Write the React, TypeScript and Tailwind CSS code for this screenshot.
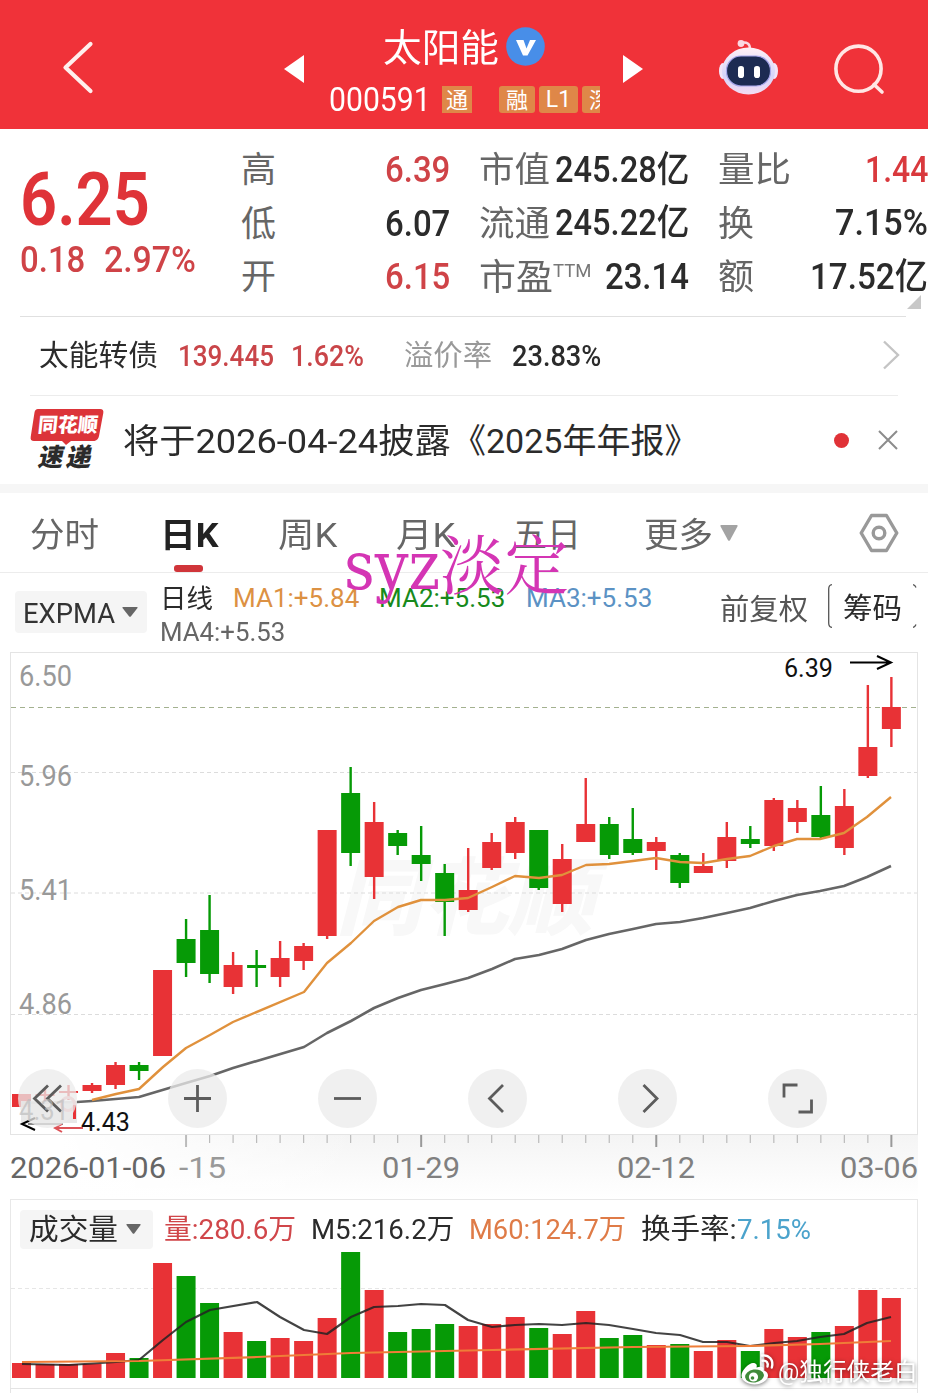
// 个股行情页 — 日K
import { useLayoutEffect, useRef, useState, type ReactNode } from 'react';
import clsx from 'clsx';

const RED = '#e83236';
const GREEN = '#069a06';

// 第一根K线的中心与间距
const X0 = 21.5;
const STEP = 23.51;
const BODY_W = 19;
const cx = (i: number) => X0 + STEP * i;

type Candle = [up: boolean, high: number, top: number, bottom: number, low: number, volTop: number];

const candles: Candle[] = [
  [true, 1094, 1094, 1107, 1107, 1363],
  [true, 1088, 1094, 1096, 1104, 1364],
  [true, 1085, 1091, 1093, 1100, 1364],
  [true, 1083, 1085, 1091, 1093, 1364],
  [true, 1062, 1065, 1085, 1089, 1353],
  [false, 1062, 1065, 1071, 1080, 1358],
  [true, 970, 970, 1056, 1056, 1263],
  [false, 919, 939, 963, 977, 1276],
  [false, 895, 930, 974, 983, 1303],
  [true, 952, 965, 987, 994, 1332],
  [false, 950, 965, 968, 987, 1341],
  [true, 941, 958, 977, 987, 1338],
  [true, 943, 946, 961, 970, 1341],
  [true, 830, 830, 936, 939, 1318],
  [false, 767, 793, 853, 866, 1252],
  [true, 802, 822, 877, 899, 1290],
  [false, 830, 833, 846, 855, 1332],
  [false, 826, 855, 864, 881, 1329],
  [false, 864, 873, 902, 936, 1324],
  [true, 848, 890, 910, 912, 1326],
  [true, 833, 842, 868, 870, 1324],
  [true, 817, 822, 853, 859, 1317],
  [false, 830, 830, 888, 890, 1328],
  [true, 844, 859, 904, 912, 1334],
  [true, 778, 824, 842, 842, 1311],
  [false, 817, 824, 855, 859, 1338],
  [false, 808, 839, 853, 855, 1335],
  [true, 837, 842, 851, 870, 1345],
  [false, 853, 855, 883, 888, 1344],
  [true, 853, 866, 873, 873, 1351],
  [true, 822, 837, 861, 868, 1340],
  [false, 826, 839, 844, 848, 1351],
  [true, 798, 800, 846, 851, 1329],
  [true, 800, 808, 822, 833, 1337],
  [false, 786, 815, 837, 838, 1332],
  [true, 789, 806, 848, 855, 1326],
  [true, 685, 747, 776, 778, 1290],
  [true, 677, 707, 729, 747, 1298],
];

const expmaFast =
  '92,1100 116,1094 139,1089 163,1067 186,1048 210,1035 233,1022 304,992 327,963 351,943 374,921 398,907 421,900 445,900 468,898 492,887 515,876 539,878 562,875 586,865 609,864 633,861 656,858 680,862 703,863 727,859 750,856 774,846 797,839 820,839 844,833 867,817 891,797';
const expmaSlow =
  '22,1103 77,1102 92,1101 139,1097 186,1083 210,1076 233,1068 304,1047 327,1033 351,1021 374,1008 398,998 421,990 445,984 468,978 492,969 515,959 539,955 562,949 586,940 609,934 633,929 656,924 680,922 703,918 727,913 750,908 774,901 797,895 820,891 844,886 867,877 891,866';
const volM5 =
  '22,1364 69,1365 116,1362 139,1360 163,1340 186,1322 210,1310 257,1302 280,1317 304,1330 327,1334 351,1317 374,1307 398,1306 421,1304 445,1305 468,1320 492,1327 515,1325 539,1324 562,1325 586,1323 609,1325 633,1329 656,1333 680,1335 703,1342 727,1342 750,1346 774,1343 797,1341 820,1337 844,1334 867,1323 891,1317';
const volM60 = '22,1362 139,1361 257,1357 351,1353 492,1350 633,1347 750,1346 820,1344 891,1341';

// 文字按容器宽度横向压缩，数字列才能对齐
function Fit({ className, children }: { className?: string; children: ReactNode }) {
  const box = useRef<HTMLSpanElement>(null);
  const inner = useRef<HTMLSpanElement>(null);
  const [scale, setScale] = useState(1);
  useLayoutEffect(() => {
    if (box.current && inner.current) setScale(box.current.clientWidth / inner.current.offsetWidth);
  }, []);
  return (
    <span ref={box} className={clsx('block shrink-0 leading-none', className)}>
      <span
        ref={inner}
        className="inline-block origin-left whitespace-nowrap"
        style={{ transform: `scaleX(${scale})` }}
      >
        {children}
      </span>
    </span>
  );
}

function Caret({ className }: { className?: string }) {
  return (
    <svg viewBox="0 0 16 10" preserveAspectRatio="none" className={clsx('shrink-0', className)}>
      <path d="M1 0H15Q16 0 15.5 1L9 9.3Q8 10.4 7 9.3L.5 1Q0 0 1 0Z" fill="currentColor" />
    </svg>
  );
}

function Header() {
  return (
    <header className="flex h-[129px] items-start bg-[#f03239] text-white">
      <svg className="mt-[40px] ml-[60px] h-[55px] w-[35px] shrink-0" viewBox="0 0 35 55" fill="none">
        <path d="M30.5 4 5.5 27.5 30.5 51" stroke="#ffefed" strokeWidth="4.2" strokeLinecap="round" strokeLinejoin="round" />
      </svg>
      <svg className="mt-[55px] ml-[189px] h-[28px] w-[20px] shrink-0" viewBox="0 0 20 28">
        <path d="M20 0V28L0 14Z" fill="#fff" />
      </svg>

      <div className="ml-[25px] w-[271px] shrink-0">
        <div className="flex h-[46px] items-end pl-[54px] pt-[27px] box-content">
          <Fit className="mb-[6px] w-[116px] text-[38px]">太阳能</Fit>
          <svg className="mb-[7px] ml-[7px] h-[39px] w-[39px]" viewBox="0 0 39 39">
            <circle cx="19.5" cy="19.5" r="19.3" fill="#488ee8" />
            <path d="M10 13H17.5L20.5 21.5 24 13H30L21.5 28.5H17Z" fill="#fff" />
          </svg>
        </div>
        <div className="flex h-[27px] items-center mt-[13px]">
          <Fit className="w-[102px] -translate-y-px text-[34px]">000591</Fit>
          <span className="ml-[11px] flex h-[27px] w-[30px] items-center justify-center bg-[#df8748] pt-[2px] text-[22px] leading-none">
            通
          </span>
          <span className="ml-[27px] flex h-[27px] w-[36px] items-center justify-center rounded-[3px] bg-[#df8748] pt-[2px] text-[22px] leading-none">
            融
          </span>
          <span className="ml-[4px] flex h-[27px] w-[39px] items-center justify-center rounded-[3px] bg-[#df8748] text-[23px] leading-none">
            L1
          </span>
          <span className="ml-[4px] flex h-[27px] w-[18px] items-center overflow-hidden rounded-l-[3px] bg-[#df8748] pt-[2px] pl-[7px] text-[22px] leading-none">
            深
          </span>
        </div>
      </div>

      <svg className="mt-[55px] ml-[23px] h-[28px] w-[20px] shrink-0" viewBox="0 0 20 28">
        <path d="M0 0V28L20 14Z" fill="#fff" />
      </svg>
      <svg className="mt-[38px] ml-[75px] h-[58px] w-[62px] shrink-0" viewBox="0 0 62 58">
        <defs>
          <linearGradient id="bot" x1="0" y1="0" x2="0" y2="1">
            <stop offset="0" stopColor="#fff0f6" />
            <stop offset="0.6" stopColor="#d6d4fa" />
            <stop offset="1" stopColor="#f3dcf2" />
          </linearGradient>
        </defs>
        <path d="M23 5Q32 3 32 11" stroke="#fbd8e2" strokeWidth="2.5" fill="none" />
        <circle cx="23" cy="5.5" r="3.4" fill="#fbd8e2" />
        <ellipse cx="5" cy="33" rx="4" ry="8" fill="#f3e4f8" />
        <ellipse cx="56" cy="33" rx="4" ry="8" fill="#f3e4f8" />
        <ellipse cx="30.5" cy="33" rx="26.5" ry="23.5" fill="url(#bot)" />
        <rect x="8.5" y="18" width="44" height="30" rx="14.5" fill="#1c2b52" stroke="#a6a6ea" strokeWidth="1.2" />
        <rect x="20" y="28" width="6" height="12" rx="2.8" fill="#fff" />
        <rect x="36" y="28" width="6" height="12" rx="2.8" fill="#fff" />
      </svg>
      <svg className="mt-[43px] ml-[52px] h-[52px] w-[54px] shrink-0" viewBox="0 0 54 52" fill="none" stroke="#ffe6e4" strokeWidth="3.6">
        <circle cx="26.5" cy="25.7" r="22.6" />
        <path d="M42 41.5 50 49" strokeLinecap="round" />
      </svg>
    </header>
  );
}

function Quote() {
  return (
    <section className="relative flex h-[187px] pt-[14px] text-[#2b2b2b]">
      <div className="w-[241px] shrink-0 pl-[20px] pt-[19px] text-[#df3338]">
        <Fit className="h-[74px] w-[130px] text-[75px] font-semibold">6.25</Fit>
        <div className="mt-[6px] flex text-[36px] font-medium text-[#cf4347]">
          <Fit className="w-[65px]">0.18</Fit>
          <Fit className="ml-[19px] w-[92px]">2.97%</Fit>
        </div>
      </div>

      <div className="w-[209px] shrink-0 text-[37px]">
        {[
          ['高', '6.39', true],
          ['低', '6.07', false],
          ['开', '6.15', true],
        ].map(([label, value, up]) => (
          <div key={label as string} className="flex h-[53.5px] items-center justify-between">
            <Fit className="w-[35px] pt-[2px] text-[35px] text-[#666]">{label}</Fit>
            <Fit className={clsx('w-[65px] font-medium', up && 'text-[#cf4347]')}>{value}</Fit>
          </div>
        ))}
      </div>

      <div className="ml-[29px] w-[210px] shrink-0 text-[36px]">
        <div className="flex h-[53.5px] items-center justify-between">
          <Fit className="w-[71px] pt-[2px] text-[35px] text-[#666]">市值</Fit>
          <Fit className="w-[134px] font-medium">245.28亿</Fit>
        </div>
        <div className="flex h-[53.5px] items-center justify-between">
          <Fit className="w-[71px] pt-[2px] text-[35px] text-[#666]">流通</Fit>
          <Fit className="w-[134px] font-medium">245.22亿</Fit>
        </div>
        <div className="flex h-[53.5px] items-center">
          <Fit className="w-[74px] pt-[2px] text-[36px] text-[#666]">市盈</Fit>
          <Fit className="mb-[12px] w-[38px] text-[19px] text-[#777]">TTM</Fit>
          <Fit className="ml-auto w-[84px] font-medium">23.14</Fit>
        </div>
      </div>

      <div className="ml-[29px] w-[210px] shrink-0 text-[36px]">
        <div className="flex h-[53.5px] items-center justify-between">
          <Fit className="w-[73px] pt-[2px] text-[35px] text-[#666]">量比</Fit>
          <Fit className="w-[63px] font-medium text-[#d9393d]">1.44</Fit>
        </div>
        <div className="flex h-[53.5px] items-center justify-between">
          <Fit className="w-[36px] pt-[2px] text-[35px] text-[#666]">换</Fit>
          <Fit className="w-[93px] font-medium">7.15%</Fit>
        </div>
        <div className="flex h-[53.5px] items-center justify-between">
          <Fit className="w-[36px] pt-[2px] text-[35px] text-[#666]">额</Fit>
          <Fit className="w-[118px] font-medium">17.52亿</Fit>
        </div>
      </div>

      <svg className="absolute right-[7px] bottom-[7px] h-[14px] w-[14px]" viewBox="0 0 14 14">
        <path d="M14 0V14H0Z" fill="#c8c8c8" />
      </svg>
    </section>
  );
}

function BondRow() {
  return (
    <section className="ml-[20px] mr-[22px] flex h-[79px] items-center border-t border-[#e0e0e0] pl-[19px] text-[29px] text-[#2b2b2b]">
      <Fit className="w-[119px]">太能转债</Fit>
      <Fit className="ml-[20px] w-[96px] font-medium text-[#c94549]">139.445</Fit>
      <Fit className="ml-[17px] w-[73px] font-medium text-[#c94549]">1.62%</Fit>
      <Fit className="ml-[40px] w-[88px] text-[#999]">溢价率</Fit>
      <Fit className="ml-[20px] w-[89px] font-medium">23.83%</Fit>
      <svg className="mr-[6px] mb-[3px] ml-auto h-[34px] w-[18px] shrink-0" viewBox="0 0 18 34" fill="none">
        <path d="M2 3.5 16 17 2 30.5" stroke="#c4c4c4" strokeWidth="2.4" />
      </svg>
    </section>
  );
}

function NewsRow() {
  return (
    <section className="ml-[30px] mr-[30px] flex h-[89px] items-center border-t border-[#ececec]">
      <div className="relative h-[62px] w-[75px] shrink-0">
        <svg className="absolute inset-0 h-full w-full" viewBox="0 0 75 62">
          <path d="M8 0H70Q74 0 73.300 4L69 27Q68.300 31 64.500 32H41L36 36 32 32H4Q0 32 .7 28L4.500 3.500Q5 0 8 0Z" fill="#dc3439" />
        </svg>
        <span className="absolute top-[6px] left-[8px] -skew-x-6 text-[20px] leading-none font-black whitespace-nowrap text-white">
          同花顺
        </span>
        <span className="absolute top-[36px] left-[9px] -skew-x-12 text-[25px] leading-none font-black tracking-[3px] whitespace-nowrap text-[#2b2b2b]">
          速递
        </span>
      </div>
      <div className="flex pt-[2px] text-[34px] text-[#2b2b2b]">
        <Fit className="ml-[18px] w-[328px]">将于2026-04-24披露</Fit>
        <Fit className="ml-[18px] w-[212px] [font-feature-settings:'halt']">《2025年年报》</Fit>
      </div>
      <span className="ml-auto h-[15px] w-[15px] rounded-full bg-[#e03237]" />
      <svg className="ml-[29px] h-[20px] w-[20px]" viewBox="0 0 20 20" stroke="#8c8c8c" strokeWidth="2">
        <path d="M1 1 19 19M19 1 1 19" />
      </svg>
    </section>
  );
}

function PeriodTabs() {
  return (
    <nav className="flex h-[80px] items-center border-b border-[#ececec] pl-[30px] text-[34px] text-[#666]">
      <Fit className="w-[69px] pt-[4px]">分时</Fit>
      <div className="relative ml-[61px]">
        <Fit className="w-[59px] pt-[4px] font-bold text-[#222]">日K</Fit>
        <span className="absolute top-[51px] left-[14px] h-[7px] w-[29px] rounded-[3px] bg-[#d0353a]" />
      </div>
      <Fit className="ml-[59px] w-[59px] pt-[4px]">周K</Fit>
      <Fit className="ml-[59px] w-[59px] pt-[4px]">月K</Fit>
      <Fit className="ml-[58px] w-[68px] pt-[4px]">五日</Fit>
      <Fit className="ml-[63px] w-[69px] pt-[4px]">更多</Fit>
      <Caret className="ml-[7px] h-[16px] w-[18px] text-[#a3a3a3]" />
      <svg className="ml-[120px] h-[40px] w-[42px]" viewBox="0 0 42 40" fill="none" stroke="#999">
        <path d="M13.500 2.500H28.500L38.800 20 28.500 37.500H13.500L3.200 20Z" strokeWidth="3.4" strokeLinejoin="round" />
        <circle cx="21" cy="20" r="5.8" strokeWidth="3.4" />
      </svg>
    </nav>
  );
}

function IndicatorBar() {
  return (
    <section className="flex h-[79px] items-start text-[26px]">
      <div className="mt-[18px] ml-[15px] flex h-[42px] w-[132px] shrink-0 items-center rounded-[4px] bg-[#f5f5f5] pt-[3px] pl-[8px]">
        <Fit className="w-[92px] text-[28px] text-[#333]">EXPMA</Fit>
        <Caret className="mb-[4px] ml-[7px] h-[10px] w-[16px] text-[#666]" />
      </div>
      <div className="mt-[9px] ml-[13px] w-[560px] shrink-0">
        <div className="flex h-[32px] items-center">
          <Fit className="w-[53px] pt-px text-[#2b2b2b]">日线</Fit>
          <Fit className="ml-[20px] w-[126px] text-[#dc9143]">MA1:+5.84</Fit>
          <Fit className="ml-[20px] w-[126px] text-[#178a1c]">MA2:+5.53</Fit>
          <Fit className="ml-[21px] w-[126px] text-[#5b92c4]">MA3:+5.53</Fit>
        </div>
        <div className="mt-[2px] flex h-[32px] items-center">
          <Fit className="w-[125px] text-[#666]">MA4:+5.53</Fit>
        </div>
      </div>
      <Fit className="mt-[23px] w-[88px] text-[29px] text-[#555]">前复权</Fit>
      <div className="relative mt-[11px] ml-[20px] flex h-[44px] w-[89px] items-center justify-center">
        <svg className="absolute inset-0 h-full w-full" viewBox="0 0 89 44" fill="none" stroke="#555" strokeWidth="1.3">
          <path d="M4 .7Q.7 1 .7 5V39Q.7 43 4 43.400M85 .7Q87 1 88 3.500M85 43.400Q87 43 88 40.500" />
        </svg>
        <Fit className="w-[59px] pt-[6px] text-[29px] text-[#2b2b2b]">筹码</Fit>
      </div>
    </section>
  );
}

function AxisText({ x, y, w, size = 29, fill = '#999', children }: { x: number; y: number; w: number; size?: number; fill?: string; children: string }) {
  return (
    <text x={x} y={y} fontSize={size} fill={fill} textLength={w} lengthAdjust="spacingAndGlyphs">
      {children}
    </text>
  );
}

const buttonIcons = [
  'M47 13.500 33.500 26.500 47 39.500M60 13.500 46.500 26.500 60 39.500',
  'M29.500 16V43M16 29.500H43',
  'M16 29.500H43',
  'M35 16 21.500 29.500 35 43',
  'M25.500 16 39 29.500 25.500 43',
  'M16 28.500V16H29.500M30.500 43H43.500V30.500',
];

function KChart() {
  return (
    <section className="relative h-[547px]">
      <svg className="block h-[547px] w-[928px]" viewBox="0 652 928 547">
        <defs>
          <linearGradient id="axis" x1="0" y1="0" x2="0" y2="1">
            <stop offset="0" stopColor="#f4f4f4" />
            <stop offset="0.7" stopColor="#fcfcfc" />
            <stop offset="1" stopColor="#fff" />
          </linearGradient>
          <linearGradient id="axisFade" x1="0" y1="0" x2="1" y2="0">
            <stop offset="0" stopColor="#fff" />
            <stop offset="0.35" stopColor="#fff" stopOpacity="0" />
          </linearGradient>
        </defs>
        <rect x="60" y="1134" width="858" height="65" fill="url(#axis)" />
        <rect x="60" y="1134" width="858" height="65" fill="url(#axisFade)" />
        <rect x="10.5" y="652.500" width="907" height="482" fill="#fff" stroke="#e4e4e4" />
        <text x="336" y="928" fontSize="84" fontWeight="900" fontStyle="italic" fill="#f8f8f8" textLength="258" lengthAdjust="spacingAndGlyphs">
          同花顺
        </text>
        {[772.5, 893, 1014.5].map(y => (
          <line key={y} x1="11" x2="917" y1={y} y2={y} stroke="#dcdcdc" strokeDasharray="4 3" />
        ))}
        <line x1="11" x2="917" y1="707.500" y2="707.500" stroke="#a3b18f" strokeDasharray="5 4" />

        <AxisText x={19} y={686} w={53}>6.50</AxisText>
        <AxisText x={19} y={786} w={53}>5.96</AxisText>
        <AxisText x={19} y={900} w={53}>5.41</AxisText>
        <AxisText x={19} y={1014} w={53}>4.86</AxisText>

        {candles.map(([up, high, top, bottom, low], i) => (
          <g key={i} fill={up ? RED : GREEN}>
            <rect x={cx(i) - 1.2} y={high} width="2.400" height={low - high} />
            <rect x={cx(i) - BODY_W / 2} y={top} width={BODY_W} height={bottom - top} />
          </g>
        ))}
        <polyline points={expmaSlow} fill="none" stroke="#666" strokeWidth="2.600" strokeLinejoin="round" />
        <polyline points={expmaFast} fill="none" stroke="#e0913c" strokeWidth="2.400" strokeLinejoin="round" />

        <AxisText x={784} y={677} w={49} size={26} fill="#111">6.39</AxisText>
        <path d="M850 662.500H890M877 656 891 662.500 877 669" fill="none" stroke="#000" strokeWidth="2" />

        {/* 左下角最低价标注 */}
        <rect x="21" y="1101" width="56" height="22" fill="#e4e4e4" opacity=".85" />
        <circle cx="68" cy="1104" r="6.500" fill="none" stroke="#ecaeb2" strokeWidth="3" />
        <path d="M74.500 1105V1119" stroke={RED} strokeWidth="3" />
        <path d="M28 1124H63" stroke="#888" strokeWidth="2" />
        <path d="M35 1118 22 1124 35 1130" fill="none" stroke="#000" strokeWidth="2" />
        <path d="M83 1128H56M62 1124 55 1128 62 1132" fill="none" stroke="#dd5257" strokeWidth="2" />
        <AxisText x={81} y={1131} w={49} size={26} fill="#111">4.43</AxisText>

        {Array.from({ length: 31 }, (_, k) => {
          const major = k % 10 === 0;
          const x = cx(k + 7);
          return (
            <line key={k} x1={x} x2={x} y1="1135" y2={major ? 1147 : 1143} stroke={major && k > 0 ? '#999' : '#bbb'} strokeWidth={major ? 2 : 1.2} />
          );
        })}
        <AxisText x={10} y={1178} w={156} fill="#666">2026-01-06</AxisText>
        <AxisText x={179} y={1178} w={47}>-15</AxisText>
        <AxisText x={382} y={1178} w={78} fill="#808080">01-29</AxisText>
        <AxisText x={617} y={1178} w={78} fill="#808080">02-12</AxisText>
        <AxisText x={840} y={1178} w={78} fill="#808080">03-06</AxisText>
      </svg>

      {/* 缩放 / 平移 / 全屏 */}
      <div className="absolute top-[416.500px] left-[17.500px] flex gap-[91px]">
        {buttonIcons.map((d, i) => (
          <button key={i} className="h-[59px] w-[59px] rounded-full bg-[#ebebeb]/75">
            <svg
              className={clsx('h-[59px] w-[59px]', i === 0 && '-translate-x-[17px] translate-y-[3px]')}
              viewBox="0 0 59 59"
              fill="none"
              stroke="#5c5c5c"
              strokeWidth="2.800"
              overflow="visible"
            >
              <path d={d} />
            </svg>
          </button>
        ))}
      </div>
      <svg className="absolute top-[440px] left-[19px] h-[36px] w-[56px]" viewBox="0 0 56 36">
        <AxisText x={0} y={28} w={50} fill="#bdbdbdb0">4.31</AxisText>
      </svg>
    </section>
  );
}

function Volume() {
  return (
    <section className="relative h-[194px]">
      <div className="mx-[10px] h-[189px] border-x border-t border-[#e8e8e8]">
        <div className="flex h-[49px] items-center pt-[9px] pl-[9px] text-[28px] text-[#2b2b2b]">
          <div className="flex h-[39px] w-[133px] shrink-0 items-center rounded-[4px] bg-[#f5f5f5] pt-[3px] pl-[9px]">
            <Fit className="w-[89px] text-[29px]">成交量</Fit>
            <Caret className="mb-[4px] ml-[8px] h-[10px] w-[15px] text-[#666]" />
          </div>
          <Fit className="ml-[11px] w-[132px] pt-[2px] text-[#d0464a]">量:280.6万</Fit>
          <Fit className="ml-[15px] w-[143px] pt-[2px]">M5:216.2万</Fit>
          <Fit className="ml-[15px] w-[157px] pt-[2px] text-[#df7b47]">M60:124.7万</Fit>
          <Fit className="ml-[15px] w-[96px] pt-[2px]">换手率:</Fit>
          <Fit className="w-[74px] pt-[2px] text-[#4ba3cc]">7.15%</Fit>
        </div>
        <svg className="-ml-[11px] block h-[139px] w-[928px]" viewBox="0 1249 928 139">
          <line x1="11" x2="917" y1="1288.500" y2="1288.500" stroke="#e6e6e6" strokeDasharray="4 3" />
          {candles.map(([up, , , , , volTop], i) => (
            <rect key={i} x={cx(i) - BODY_W / 2} y={volTop} width={BODY_W} height={1378 - volTop} fill={up ? RED : GREEN} />
          ))}
          <polyline points={volM5} fill="none" stroke="#222" strokeOpacity=".85" strokeWidth="2.200" strokeLinejoin="round" />
          <polyline points={volM60} fill="none" stroke="#ef7d38" strokeWidth="2.200" />
        </svg>
      </div>
      <div className="mx-[10px] h-[5px] border-x border-t border-[#e4e4e4]" />

      <div className="absolute top-[152px] left-[740px] flex items-center text-white drop-shadow-[0_1px_2px_rgba(0,0,0,0.55)]">
        <svg className="h-[36px] w-[36px]" viewBox="0 0 36 36" fill="none">
          <path
            d="M13 12C9 12 1.500 19 1.500 24.500C1.500 30 8 33.500 14.500 33.500C22 33.500 28 29 28 24.500C28 21.500 25.500 20 23.500 19.500C24.500 16.500 22 14.500 16.500 16.500C17.500 13.500 16 12 13 12Z"
            fill="#fff"
          />
          <ellipse cx="14.500" cy="25" rx="9.500" ry="6.500" fill="#3f8a3a" transform="rotate(-8 14.500 25)" />
          <circle cx="13.500" cy="26" r="4.600" fill="#fff" />
          <circle cx="12.500" cy="27" r="1.800" fill="#3f8a3a" />
          <path d="M22 4.500C29 3.500 34 9 31.800 16.500M22.500 9.800C26.500 9 28.500 12 27.500 15.500" stroke="#fff" strokeWidth="2.400" strokeLinecap="round" />
        </svg>
        <Fit className="ml-[2px] w-[140px] pt-[5px] text-[24px]">@独行侠老白</Fit>
      </div>
    </section>
  );
}

export default function App() {
  return (
    <main className="relative h-[1393px] w-[928px] overflow-hidden bg-white font-[Roboto,'Noto_Sans_CJK_SC',sans-serif]">
      <Header />
      <Quote />
      <BondRow />
      <NewsRow />
      <div className="h-[9px] bg-[#f6f6f6]" />
      <PeriodTabs />
      <IndicatorBar />
      <KChart />
      <Volume />
      <div className="absolute top-[532px] left-[344px] flex items-baseline font-['DejaVu_Serif','Noto_Serif_CJK_SC','Noto_Sans_CJK_SC',serif] text-[#d435b4]">
        <Fit className="w-[96px] text-[68px]">syz</Fit>
        <Fit className="w-[129px] text-[65px]">淡定</Fit>
      </div>
    </main>
  );
}
